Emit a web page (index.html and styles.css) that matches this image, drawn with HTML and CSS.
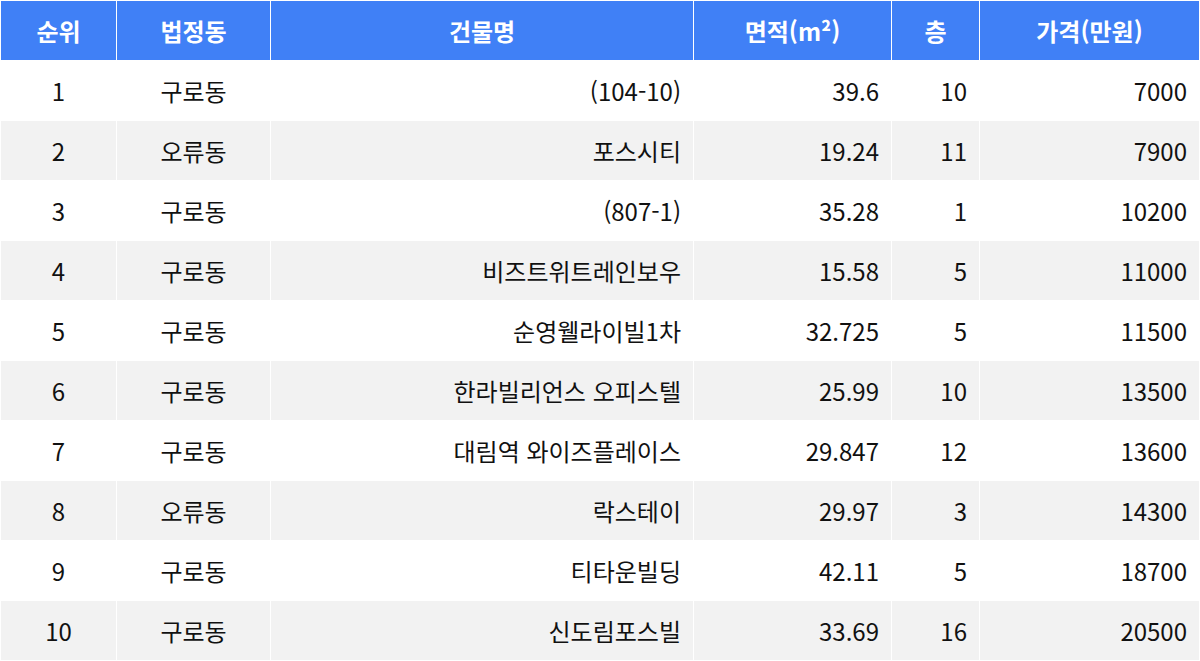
FILE: index.html
```html
<!DOCTYPE html>
<html lang="ko">
<head>
<meta charset="utf-8">
<link rel="stylesheet" href="styles.css">
</head>
<body>
<table class="ranking">
  <colgroup>
    <col class="c-rank"><col class="c-dong"><col class="c-name"><col class="c-area"><col class="c-floor"><col class="c-price">
  </colgroup>
  <thead>
    <tr><th>순위</th><th>법정동</th><th>건물명</th><th>면적(m²)</th><th>층</th><th>가격(만원)</th></tr>
  </thead>
  <tbody>
    <tr><td class="ctr">1</td><td class="ctr">구로동</td><td class="rt">(104-10)</td><td class="rt">39.6</td><td class="rt">10</td><td class="rt">7000</td></tr>
    <tr><td class="ctr">2</td><td class="ctr">오류동</td><td class="rt">포스시티</td><td class="rt">19.24</td><td class="rt">11</td><td class="rt">7900</td></tr>
    <tr><td class="ctr">3</td><td class="ctr">구로동</td><td class="rt">(807-1)</td><td class="rt">35.28</td><td class="rt">1</td><td class="rt">10200</td></tr>
    <tr><td class="ctr">4</td><td class="ctr">구로동</td><td class="rt">비즈트위트레인보우</td><td class="rt">15.58</td><td class="rt">5</td><td class="rt">11000</td></tr>
    <tr><td class="ctr">5</td><td class="ctr">구로동</td><td class="rt">순영웰라이빌1차</td><td class="rt">32.725</td><td class="rt">5</td><td class="rt">11500</td></tr>
    <tr><td class="ctr">6</td><td class="ctr">구로동</td><td class="rt">한라빌리언스 오피스텔</td><td class="rt">25.99</td><td class="rt">10</td><td class="rt">13500</td></tr>
    <tr><td class="ctr">7</td><td class="ctr">구로동</td><td class="rt">대림역 와이즈플레이스</td><td class="rt">29.847</td><td class="rt">12</td><td class="rt">13600</td></tr>
    <tr><td class="ctr">8</td><td class="ctr">오류동</td><td class="rt">락스테이</td><td class="rt">29.97</td><td class="rt">3</td><td class="rt">14300</td></tr>
    <tr><td class="ctr">9</td><td class="ctr">구로동</td><td class="rt">티타운빌딩</td><td class="rt">42.11</td><td class="rt">5</td><td class="rt">18700</td></tr>
    <tr><td class="ctr">10</td><td class="ctr">구로동</td><td class="rt">신도림포스빌</td><td class="rt">33.69</td><td class="rt">16</td><td class="rt">20500</td></tr>
  </tbody>
</table>
</body>
</html>
```

FILE: styles.css
```css
html, body {
  margin: 0;
  padding: 0;
  background: #ffffff;
}

body {
  font-family: "Noto Sans CJK KR", "Noto Sans", sans-serif;
  color: #111111;
}

.ranking {
  width: 1200px;
  border-collapse: separate;
  border-spacing: 1px;
  table-layout: fixed;
}

.c-rank { width: 115px; }
.c-dong { width: 153px; }
.c-name { width: 422px; }
.c-area { width: 197px; }
.c-floor { width: 87px; }
.c-price { width: 219px; }

.ranking th,
.ranking td {
  height: 59px;
  padding: 0 12px;
  font-size: 24px;
  line-height: 59px;
  white-space: nowrap;
  box-sizing: border-box;
}

.ranking th {
  background: #4080f6;
  color: #ffffff;
  font-weight: 700;
  text-align: center;
}

.ranking tbody tr:nth-child(even) td {
  background: #f2f2f2;
}

.ranking tbody tr:nth-child(odd) td {
  background: #ffffff;
}

.ctr { text-align: center; }
.rt { text-align: right; }
```
